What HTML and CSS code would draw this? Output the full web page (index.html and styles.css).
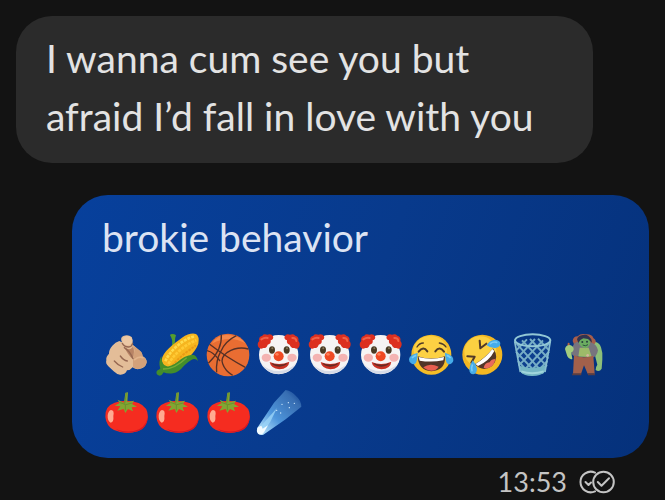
FILE: index.html
```html
<!DOCTYPE html>
<html lang="en">
<head>
  <meta charset="UTF-8">
  <meta name="viewport" content="width=device-width, initial-scale=1.0">
  <title>Messages</title>
  <link rel="stylesheet" href="styles.css">
</head>
<body>

<main class="chat">
  <div class="bubble received">
    <p>I wanna cum see you but afraid I’d fall in love with you</p>
  </div>

  <div class="bubble sent">
    <p>brokie behavior</p>
    <div class="emojis">
      <!-- pointing hand -->
      <svg class="emoji" viewBox="12 18 144 144" role="img" aria-label="pointing hand">
        <path d="M72 52 Q65 38 76 33 Q90 27 101 36 Q106 45 104 59 L125 77 Q133 82 134 94 Q147 100 146 112 Q143 130 123 132 Q112 134 104 127 Q97 136 87 136 Q82 150 66 149 Q56 148 47 139 L31 124 Q22 116 25 106 Q23 96 33 86 Q32 75 43 62 Q52 51 64 48Z" fill="#e3bd98"/>
        <path d="M105 60 Q112 74 107 88 Q104 104 105 127 Q114 134 125 131 Q144 127 146 112 Q145 101 134 94 Q133 81 124 76Z" fill="#d3a17a"/>
        <ellipse cx="88" cy="47" rx="15" ry="14" fill="#ecc8a5"/>
        <path d="M80 68 Q99 79 105 63 Q112 83 103 101 Q91 91 80 68Z" fill="#b98465"/>
        <g fill="none" stroke="#966852" stroke-width="4" stroke-linecap="round">
          <path d="M73 55 Q79 66 92 66 Q101 65 104 55"/>
          <path d="M67 93 Q76 106 88 108"/>
          <path d="M49 108 Q59 120 74 126"/>
          <path d="M79 68 Q95 78 105 101"/>
        </g>
        <path d="M110 104 Q122 93 135 98" fill="none" stroke="#e3b58d" stroke-width="5" stroke-linecap="round"/>
      </svg>
      <!-- corn -->
      <svg class="emoji" viewBox="165 18 144 144" role="img" aria-label="corn">
        <path d="M218 28 Q227 25 234 31 Q231 38 231 48 Q231 62 218 78 L193 110 Q207 76 222 61 Q225 43 216 31Z" fill="#559d2e"/>
        <path d="M191 105 C194 80 226 57 252 38 Q276 22 294 27 Q305 34 301 56 C293 83 261 108 237 126 Q211 141 197 130Z" fill="#f6b51f"/>
        <path d="M202 109 C212 83 250 44 289 34" fill="none" stroke="#ffdb4c" stroke-width="8" stroke-dasharray="9 3"/>
        <path d="M211 117 C229 87 260 59 295 46" fill="none" stroke="#ffca35" stroke-width="8" stroke-dasharray="9 3"/>
        <path d="M223 122 C242 97 270 78 294 61" fill="none" stroke="#eb9b16" stroke-width="6" stroke-dasharray="8 3"/>
        <path d="M190 93 Q190 119 205 123 Q214 128 238 111 Q258 92 284 89 Q296 90 300 108 Q292 99 281 104 Q270 110 258 122 Q243 141 225 145 Q207 147 197 142 Q190 155 181 151 Q172 145 177 137 L187 131 Q180 112 190 93Z" fill="#438d2b"/>
        <path d="M195 132 Q229 133 266 98" fill="none" stroke="#75ac36" stroke-width="4"/>
      </svg>
      <!-- basketball -->
      <svg class="emoji" viewBox="12 18 144 144" role="img" aria-label="basketball">
        <circle cx="84" cy="90" r="64" fill="#e96d32"/>
        <path d="M35 56 Q56 25 91 31 Q121 34 136 55 Q89 29 35 56Z" fill="#f5884b"/>
        <g fill="none" stroke="#563127" stroke-width="4">
          <path d="M29 58 Q82 99 136 127"/>
          <path d="M64 29 Q67 75 25 115"/>
          <path d="M109 32 Q75 49 62 80 Q47 107 50 142"/>
          <path d="M145 72 Q113 63 82 82 Q61 98 68 116 Q75 137 98 151"/>
          <path d="M21 77 Q41 81 60 108"/>
        </g>
      </svg>
      <!-- clown, drawn once and reused -->
      <svg class="emoji" viewBox="165 18 144 144" role="img" aria-label="clown">
        <g id="clown">
          <circle cx="236" cy="89" r="59" fill="#f6f4f4"/>
          <path d="M184 116 Q206 149 237 147 Q270 146 289 114 Q271 135 237 138 Q204 138 184 116Z" fill="#d5dae7"/>
          <path d="M175 66 Q170 56 178 48 Q174 36 187 32 Q191 25 202 29 Q214 25 219 34 Q222 43 212 46 Q214 57 203 59 Q200 70 190 69 Q180 74 175 66Z" fill="#dc3020"/>
          <path d="M297 66 Q302 56 295 48 Q298 36 286 32 Q280 25 270 29 Q259 25 254 34 Q251 43 261 46 Q259 57 269 59 Q273 70 283 69 Q293 74 297 66Z" fill="#dc3020"/>
          <path d="M184 43 Q195 36 203 39 M277 39 Q288 38 289 48" fill="none" stroke="#f16145" stroke-width="6" stroke-linecap="round"/>
          <ellipse cx="199" cy="98" rx="14" ry="12" fill="#f4b3b2"/>
          <ellipse cx="276" cy="98" rx="14" ry="12" fill="#f4b3b2"/>
          <ellipse cx="216" cy="75" rx="9" ry="11" fill="#493b24"/>
          <ellipse cx="260" cy="75" rx="9" ry="11" fill="#493b24"/>
          <circle cx="217" cy="70" r="3" fill="#8a795a"/>
          <circle cx="261" cy="70" r="3" fill="#8a795a"/>
          <path d="M209 111 Q238 123 268 110 Q266 131 238 133 Q212 130 209 111Z" fill="#c83224"/>
          <path d="M214 114 Q238 124 263 114 Q256 124 238 125 Q220 124 214 114Z" fill="#642c24"/>
          <circle cx="236" cy="94" r="15" fill="#f04a23"/>
          <ellipse cx="231" cy="88" rx="5" ry="4" fill="#ff8056"/>
        </g>
      </svg>
      <svg class="emoji" viewBox="165 18 144 144" role="img" aria-label="clown"><use href="#clown"/></svg>
      <svg class="emoji" viewBox="165 18 144 144" role="img" aria-label="clown"><use href="#clown"/></svg>
      <!-- tears of joy -->
      <svg class="emoji" viewBox="24 18 144 144" role="img" aria-label="face with tears of joy">
        <circle cx="94" cy="89" r="60" fill="#f5bd27"/>
        <ellipse cx="91" cy="76" rx="50" ry="43" fill="#fdd143"/>
        <g fill="none" stroke="#513b27" stroke-linecap="round">
          <path d="M56 80 Q70 62 82 79 M106 79 Q119 62 132 80" stroke-width="6"/>
          <path d="M51 66 Q58 54 70 54 M118 54 Q132 56 138 66" stroke-width="4"/>
        </g>
        <path d="M53 94 Q94 107 135 94 Q137 137 94 139 Q55 136 53 94Z" fill="#513528"/>
        <path d="M56 96 Q94 107 132 96 L130 106 Q94 113 59 107Z" fill="#fff"/>
        <path d="M70 127 Q89 113 116 125 Q108 138 93 137 Q78 136 70 127Z" fill="#e85f50"/>
        <path d="M53 83 Q52 105 48 113 Q42 121 33 115 Q23 107 30 95 Q37 87 53 83Z" fill="#46ace9"/>
        <path d="M135 83 Q136 105 140 113 Q147 121 155 115 Q164 107 157 95 Q149 87 135 83Z" fill="#46ace9"/>
        <path d="M36 99 Q42 92 49 91 M152 99 Q147 93 140 91" fill="none" stroke="#7acbf5" stroke-width="5"/>
      </svg>
      <!-- rolling on the floor -->
      <svg class="emoji" viewBox="177 18 144 144" role="img" aria-label="rolling on the floor laughing">
        <circle cx="247" cy="89" r="60" fill="#f3b722"/>
        <ellipse cx="241" cy="80" rx="48" ry="46" fill="#fbd041"/>
        <path d="M239 47 L241 70 L259 56 M202 94 L224 95 L214 113" fill="none" stroke="#503928" stroke-width="6" stroke-linecap="round" stroke-linejoin="round"/>
        <path d="M279 70 Q258 97 224 118 Q250 143 276 123 Q300 98 279 70Z" fill="#513529"/>
        <path d="M277 72 Q258 98 226 117 L234 123 Q269 107 283 78Z" fill="#fff"/>
        <path d="M251 129 Q254 113 269 112 Q274 102 286 102 Q284 118 271 127 Q261 132 251 129Z" fill="#e96b5c"/>
        <path d="M260 61 Q269 45 286 44 Q302 46 301 57 Q299 68 286 69 Q271 70 260 61Z" fill="#46ace9"/>
        <path d="M218 106 Q228 116 231 132 Q230 147 220 148 Q208 146 208 134 Q208 121 218 106Z" fill="#46ace9"/>
        <path d="M271 56 Q280 49 290 52 M217 120 Q213 130 216 137" fill="none" stroke="#7acbf5" stroke-width="5" stroke-linecap="round"/>
      </svg>
      <!-- wastebasket -->
      <svg class="emoji" viewBox="18 18 144 144" role="img" aria-label="wastebasket">
        <path d="M32 49 L48 140 Q62 154 86 153 Q109 153 123 140 L139 49" fill="#0d3f8e"/>
        <g fill="none" stroke="#76adc6" stroke-width="6">
          <path d="M38 56 L118 145 M36 80 L97 144 M54 46 L129 124 M78 42 L133 101 M102 41 L136 77 M42 108 L74 142"/>
          <path d="M134 56 L53 144 M135 80 L75 144 M117 46 L44 122 M93 42 L41 98 M69 43 L36 77 M130 108 L98 142"/>
        </g>
        <path d="M47 122 Q84 137 126 121 L123 140 Q109 153 86 153 Q62 154 49 140Z" fill="#74b5c4"/>
        <path d="M52 139 Q84 150 119 139" fill="none" stroke="#a0d5db" stroke-width="6"/>
        <path d="M32 49 L49 141 M139 49 L123 141" fill="none" stroke="#87bdd0" stroke-width="5"/>
        <ellipse cx="86" cy="46" rx="53" ry="18" fill="none" stroke="#92c7d5" stroke-width="6"/>
      </svg>
      <!-- troll -->
      <svg class="emoji" viewBox="18 18 144 144" role="img" aria-label="troll">
        <path d="M112 49 Q133 50 138 67 Q144 83 142 104 L140 131 Q133 142 122 135 Q121 127 127 119 L119 88Z" fill="#8dbf79"/>
        <path d="M53 48 Q54 34 68 34 Q77 24 93 28 Q111 27 115 39 Q128 48 118 58 L107 70 L61 68Z" fill="#a75d4b"/>
        <path d="M65 51 Q51 57 54 72 L49 86 Q59 99 73 93 L110 99 Q126 96 129 76 Q125 56 105 51Z" fill="#77747e"/>
        <path d="M74 68 L101 68 L110 95 H70Z" fill="#9dba69"/>
        <path d="M57 91 Q84 102 115 92 L119 146 H98 L87 121 L78 147 H54Z" fill="#a2604b"/>
        <path d="M71 45 Q77 32 94 34 Q105 39 106 51 Q104 67 91 70 Q77 67 71 54Z" fill="#6cac61"/>
        <path d="M66 43 Q70 31 83 30 Q99 25 109 43 L111 53 L99 42 L85 40 L76 45 L70 54Z" fill="#303350"/>
        <path d="M39 85 L41 56" stroke="#b86640" stroke-width="6" stroke-linecap="round"/>
        <path d="M30 72 Q32 60 45 60 Q57 64 56 74 Q54 80 49 83 L52 102 Q42 105 37 94 Q34 85 30 72Z" fill="#a2cc7e"/>
        <path d="M53 145 H79 V151 H51Z M98 145 H118 L121 151 H99Z" fill="#5a3e43"/>
        <circle cx="82" cy="51" r="3" fill="#27403e"/>
        <circle cx="96" cy="50" r="3" fill="#27403e"/>
        <path d="M83 60 Q91 65 99 59" fill="none" stroke="#2b533d" stroke-width="3"/>
        <circle cx="98" cy="91" r="4" fill="#d3b69c"/>
      </svg>
      <!-- tomato, drawn once and reused -->
      <svg class="emoji" viewBox="12 15 144 144" role="img" aria-label="tomato">
        <g id="tomato">
          <path d="M22 99 Q20 66 50 56 Q84 44 122 57 Q150 69 150 99 Q147 131 119 142 Q82 153 48 138 Q25 127 22 99Z" fill="#f52c20"/>
          <path d="M149 91 Q149 123 123 136 Q93 149 54 136 Q77 153 119 142 Q151 132 149 91Z" fill="#d71823"/>
          <path d="M39 78 Q50 78 46 96 Q48 115 38 116 Q28 111 29 94 Q31 80 39 78Z" fill="#ffab91"/>
          <path d="M78 56 L82 26 L90 25 L88 54 L108 50 L102 60 L117 68 L101 70 L105 82 L90 75 L82 87 L77 75 L58 80 L67 67 L50 65 L65 57 L59 47Z" fill="#83a532"/>
          <path d="M80 59 L85 27 M64 55 L83 62 L103 57 M82 62 V79" fill="none" stroke="#6b922c" stroke-width="3"/>
        </g>
      </svg>
      <svg class="emoji" viewBox="12 15 144 144" role="img" aria-label="tomato"><use href="#tomato"/></svg>
      <svg class="emoji" viewBox="12 15 144 144" role="img" aria-label="tomato"><use href="#tomato"/></svg>
      <!-- comet -->
      <svg class="emoji" viewBox="165 15 144 144" role="img" aria-label="comet">
        <defs>
          <linearGradient id="tail" x1="0" y1="1" x2="1" y2="0">
            <stop offset="0" stop-color="#c8efff"/>
            <stop offset=".4" stop-color="#4e96dc"/>
            <stop offset=".8" stop-color="#4c84c2" stop-opacity=".7"/>
            <stop offset="1" stop-color="#3c70b4" stop-opacity=".15"/>
          </linearGradient>
        </defs>
        <path d="M171 133 L222 56 L257 18 Q276 21 291 39 Q304 51 304 68 L257 106 L190 152 Q173 157 171 133Z" fill="url(#tail)"/>
        <path d="M177 133 L231 72 L211 113 L188 147Z" fill="#9bd5f7" opacity=".8"/>
        <path d="M174 130 L184 125 L188 134 L204 124 L192 145 Q184 156 174 149 Q167 142 174 130Z" fill="#f4fcff"/>
        <g fill="#d8efff">
          <circle cx="246" cy="61" r="2"/><circle cx="265" cy="56" r="2"/><circle cx="283" cy="58" r="2"/>
          <circle cx="230" cy="79" r="2"/><circle cx="242" cy="87" r="2"/><circle cx="268" cy="71" r="2"/>
        </g>
      </svg>
    </div>
  </div>

  <div class="status">
    <time datetime="13:53">13:53</time>
    <!-- read receipt -->
    <svg class="receipt" viewBox="0 0 36 24" role="img" aria-label="Read">
      <path d="M16 2.6 A10.3 10.3 0 1 0 16 21.4" />
      <circle cx="24.5" cy="12" r="10.3"/>
      <path d="M6.5 12 L9.5 15 L12 12.5 M18.8 12 L22.5 15.7 L30 8.2"/>
    </svg>
  </div>
</main>

</body>
</html>
```
FILE: styles.css
```css
body {
  margin: 0;
  background-color: #131313;
  color: #e3e3e3;
  font-family: "Lato", "Roboto", sans-serif;
  font-size: 39px;
  line-height: 58px;
}
.chat {
  display: flex;
  flex-direction: column;
  padding: 16px 16px 0;
}
.bubble {
  padding: 13px 30px 18px;
  border-radius: 36px;
}
.bubble p {
  margin: 0;
}
.received {
  margin-right: 56px;
  background-color: #2b2b2b;
}
.sent {
  margin-top: 32px;
  margin-left: 56px;
  background-image: linear-gradient(110deg, #07409c, #083a8c 50%, #05317b);
  color: #dce3f3;
}
.emojis {
  display: flex;
  flex-wrap: wrap;
  column-gap: 3px;
  row-gap: 10px;
  padding: 65px 0 3px;
}
.emoji {
  display: block;
  width: 48px;
  height: 48px;
}
.status {
  display: flex;
  justify-content: flex-end;
  align-items: center;
  gap: 12px;
  padding: 7px 34px 0 0;
  color: #c4c4c4;
  font-size: 27px;
  line-height: 34px;
}
.receipt {
  width: 36px;
  height: 24px;
  fill: none;
  stroke: #c4c4c4;
  stroke-width: 2;
  stroke-linecap: round;
  stroke-linejoin: round;
}
```
